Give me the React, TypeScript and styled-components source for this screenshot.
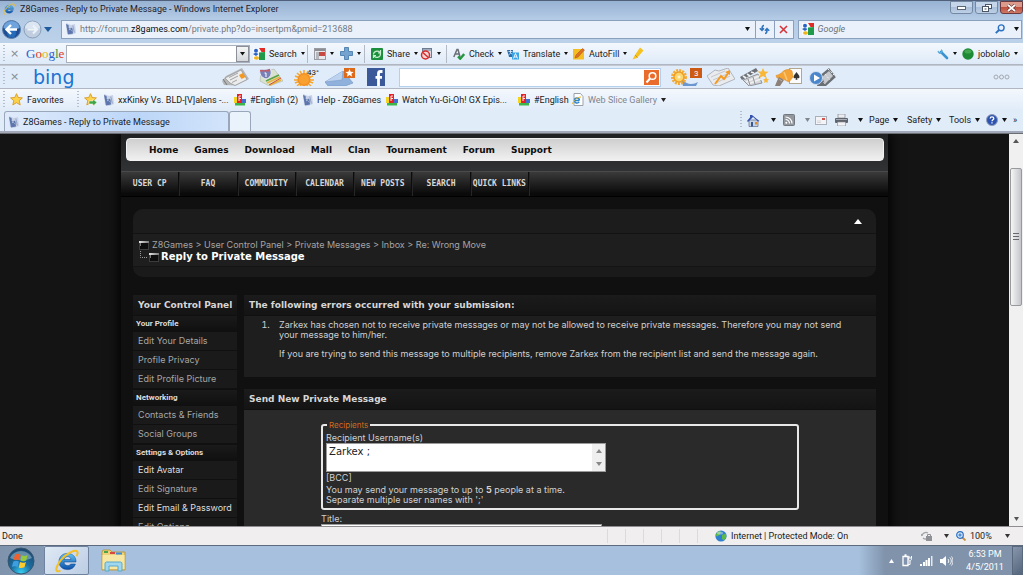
import React from "react";
import styled, { createGlobalStyle } from "styled-components";

const Global = createGlobalStyle`
  * { box-sizing: border-box; }
  html, body, #root { height: 100%; }
  body { margin: 0; overflow: hidden; background: #141414; }
  button, input, textarea { font: inherit; color: inherit; margin: 0; border-radius: 0; outline: none; }
  button { background: none; border: 0; padding: 0; cursor: pointer; }
  a { color: inherit; text-decoration: none; }
  svg { display: block; flex: none; }
`;

const ui = `Roboto, "Open Sans", sans-serif`;
const web = `Inter, "DejaVu Sans", sans-serif`;
const webBold = `"DejaVu Sans", sans-serif`;

/* ---------- window chrome ---------- */

const Window = styled.div`
  height: 100vh;
  display: flex;
  flex-direction: column;
  font: 9px/14px ${ui};
  color: #1b1b1b;
`;

const TitleBar = styled.header`
  display: flex;
  align-items: center;
  height: 19px;
  padding: 0 0 3px 3px;
  gap: 5px;
  border-top: 1px solid #50607a;
  background: linear-gradient(#98b2d3, #b4cbe6);
  white-space: nowrap;
`;

const WindowTitle = styled.h1`
  flex: 1;
  margin: 0;
  font: inherit;
  color: #1a222e;
`;

const WindowButtons = styled.div`
  display: flex;
  gap: 2px;
  align-self: flex-start;
`;

const WindowButton = styled.button<{ $close?: boolean }>`
  display: flex;
  align-items: center;
  justify-content: center;
  width: 23px;
  height: 13px;
  border: 1px solid ${(p) => (p.$close ? "#6b3b40" : "#7388a3")};
  border-radius: 0 0 3px 3px;
  background: ${(p) =>
    p.$close
      ? "linear-gradient(#dc9a8c 0 45%, #bf4f3f 50%, #cf7a66)"
      : "linear-gradient(#c5d6ea 0 45%, #a9bfda 50%, #bdd0e6)"};
`;

const NavBar = styled.div`
  display: flex;
  align-items: center;
  height: 24px;
  padding: 0 1px 4px 2px;
  background: linear-gradient(#b4cbe6, #bcd2ea);
`;

const NavButtons = styled.div`
  display: flex;
  align-items: center;
  gap: 2px;
  width: 59px;
`;

const AddressBox = styled.form`
  display: flex;
  align-items: center;
  flex: 1;
  height: 19px;
  padding-left: 3px;
  gap: 4px;
  border: 1px solid #8ba0bd;
  background: #eaf1fa;
`;

const Address = styled.a`
  flex: 1;
  white-space: nowrap;
  color: #747a83;
  b { font-weight: 400; color: #0c0f14; }
`;

const AddressButtons = styled.span`
  display: flex;
  align-self: stretch;
`;

const BoxButton = styled.button<{ $w?: number; $line?: boolean }>`
  display: flex;
  align-items: center;
  justify-content: center;
  align-self: stretch;
  width: ${(p) => p.$w ?? 19}px;
  border-left: ${(p) => (p.$line ? "1px solid #8ba0bd" : "0")};
`;

const SearchBox = styled(AddressBox)`
  flex: none;
  width: 22%;
  margin-left: 4px;
  input {
    flex: 1;
    min-width: 0;
    border: 0;
    padding: 0;
    background: none;
    font-style: italic;
    &::placeholder { color: #6a717b; opacity: 1; }
  }
`;

const Toolbar = styled.div<{ $h: number }>`
  display: flex;
  align-items: center;
  height: ${(p) => p.$h}px;
  padding-left: 3px;
  border-bottom: 1px solid #b0b6c2;
  background: linear-gradient(#f4f8fd, #deeaf8);
  white-space: nowrap;
`;

const BingBar = styled(Toolbar)`
  background: #e0ecf9;
  border-top: 1px solid #c3c8d1;
`;

const Grip = styled.span`
  width: 2px;
  height: 18px;
  margin-right: 5px;
  background: repeating-linear-gradient(#b5bfce 0 1px, transparent 1px 3px);
`;

const Closer = styled.button`
  width: 9px;
  color: #858a93;
  font: 11px/14px "DejaVu Sans", sans-serif;
`;

const Google = styled.span`
  width: 40px;
  margin-left: 7px;
  font: 13px/16px "Liberation Serif", serif;
  color: #2f5fd0;
  i { font-style: normal; color: #d93a2b; }
  b { font-weight: 400; color: #e8b414; }
  em { font-style: normal; color: #2a9a41; }
`;

const Combo = styled.div`
  display: flex;
  width: 184px;
  height: 18px;
  margin-right: 3px;
  border: 1px solid #a9b1be;
  background: #fff;
  input { flex: 1; min-width: 0; border: 0; padding: 0 3px; background: none; }
  button { width: 13px; border: 1px solid #8b9099; background: linear-gradient(#f5f5f5, #d5d7db); }
`;

const Tool = styled.button<{ $w?: number }>`
  display: flex;
  align-items: center;
  gap: 4px;
  width: ${(p) => (p.$w ? p.$w + "px" : "auto")};
  height: 18px;
  flex: none;
  white-space: nowrap;
`;

const Rule = styled.span`
  width: 1px;
  height: 18px;
  margin: 0 6px 0 4px;
  background: #b3bac5;
`;

const Push = styled.span`
  flex: 1;
`;

const BingLogo = styled.span`
  width: 185px;
  margin-left: 14px;
  font: 19px/20px "DejaVu Sans", sans-serif;
  color: #1c73d2;
`;

const BingCell = styled.button<{ $w: number }>`
  display: flex;
  justify-content: center;
  width: ${(p) => p.$w}px;
  flex: none;
`;

const BingSearch = styled.form`
  display: flex;
  align-items: center;
  width: 262px;
  height: 19px;
  margin: 0 9px 0 6px;
  padding-right: 1px;
  border: 1px solid #b5cfee;
  background: #fff;
  input { flex: 1; min-width: 0; border: 0; padding: 0 4px; background: none; }
`;

const FavBar = styled.nav`
  display: flex;
  align-items: center;
  height: 21px;
  padding-left: 3px;
  background: linear-gradient(#f4f8fd, #e1ecf9);
  white-space: nowrap;
`;

const FavLink = styled.a<{ $w: number; $dim?: boolean }>`
  display: flex;
  align-items: center;
  gap: 4px;
  width: ${(p) => p.$w}px;
  flex: none;
  color: ${(p) => (p.$dim ? "#7e858f" : "inherit")};
`;

const TabBar = styled.div`
  display: flex;
  align-items: flex-end;
  height: 23px;
  padding-left: 4px;
  border-bottom: 2px solid #a3a9b8;
  background: #e1ecf9;
  white-space: nowrap;
`;

const Tab = styled.button<{ $active?: boolean }>`
  display: flex;
  align-items: center;
  gap: 4px;
  width: ${(p) => (p.$active ? 225 : 22)}px;
  height: 20px;
  padding-left: 3px;
  border: 1px solid #9aa7bb;
  border-bottom: 0;
  border-radius: 3px 3px 0 0;
  background: ${(p) => (p.$active ? "linear-gradient(90deg, #dfebfb, #bcd6f8 60%, #d2e4fa)" : "#eaf2fc")};
`;

const Commands = styled.div`
  display: flex;
  align-items: center;
  height: 22px;
  margin-left: auto;
`;

/* ---------- web page ---------- */

const Viewport = styled.div`
  flex: 1;
  min-height: 0;
  display: flex;
  border-top: 1px solid #6b6e75;
`;

const Page = styled.div`
  flex: 1;
  min-width: 0;
  overflow: hidden;
  background: #141414;
  font: 9px/10px ${web};
  color: #d0d0d0;
`;

const Site = styled.div`
  width: 76%;
  margin: 0 auto;
  min-height: 100%;
  background: #101010;
  box-shadow: 0 0 12px 2px #000;
`;

const SiteHead = styled.div`
  padding: 4px 4px 10px 5px;
  background: linear-gradient(#202123, #303234);
`;

const SiteMenu = styled.nav`
  display: flex;
  align-items: center;
  gap: 16px;
  height: 23px;
  padding-left: 22px;
  border: 1px solid #f2f2f2;
  border-radius: 4px;
  background: linear-gradient(#cfcfcf, #f0f0f0);
  font: 700 9px/10px ${webBold};
  color: #0c0c0c;
`;

const ForumNav = styled.nav`
  display: flex;
  height: 26px;
  border-top: 1px solid #4a4a4a;
  background: linear-gradient(#3a3a3a, #0a0a0a 90%);
  border-bottom: 1px solid #000;
`;

const ForumLink = styled.a`
  display: flex;
  align-items: center;
  justify-content: center;
  flex: 0 0 7.6%;
  border-right: 1px solid #0c0c0c;
  box-shadow: 1px 0 #262626;
  font: 700 8px/10px "DejaVu Sans Mono", monospace;
  color: #d8d8d8;
  white-space: nowrap;
`;

const Body = styled.main`
  padding: 12px 12px 0;
`;

const Crumbs = styled.section`
  height: 68px;
  border-radius: 10px;
  background: linear-gradient(#1c1c1c 24px, #131313 24px 25px, #1e1e1e 25px 57px, #141414 57px 58px, #1a1a1a 58px);
`;

const CrumbTop = styled.div`
  display: flex;
  align-items: center;
  justify-content: flex-end;
  height: 25px;
  padding-right: 14px;
`;

const CrumbLine = styled.div`
  display: flex;
  align-items: center;
  gap: 3px;
  height: 12px;
  margin: 5px 0 0 6px;
  color: #a5a5a5;
  white-space: nowrap;
`;

const PageName = styled(CrumbLine)`
  gap: 2px;
  margin-top: 0;
  font: 700 10px/12px ${webBold};
  color: #fff;
`;

const Columns = styled.div`
  display: grid;
  grid-template-columns: 104px minmax(0, 1fr);
  gap: 7px;
  margin-top: 18px;
`;

const Heading = styled.h2`
  margin: 0 0 1px;
  height: 20px;
  padding: 0 5px;
  font: 700 9px/20px ${webBold};
  color: #d6d6d6;
  background: linear-gradient(#1b1b1b, #141414);
  white-space: nowrap;
`;

const SideGroup = styled.h3`
  margin: 0 0 1px;
  height: 15px;
  padding: 0 3px;
  font: 700 8px/15px ${ui};
  color: #dcdcdc;
  background: linear-gradient(#1a1a1a, #101010);
`;

const SideList = styled.ul`
  margin: 0 0 2px;
  padding: 0;
  list-style: none;
`;

const SideItem = styled.li<{ $lit?: boolean }>`
  height: 18px;
  margin-bottom: 1px;
  padding-left: 5px;
  line-height: 18px;
  background: #1a1a1a;
  color: ${(p) => (p.$lit ? "#dedede" : "#a6a6a6")};
  white-space: nowrap;
`;

const ErrorBox = styled.div`
  height: 61px;
  padding: 4px 16px 0 17px;
  background: #1e1e1e;
  margin-bottom: 12px;
  ol { margin: 0; padding-left: 11px; }
  li { padding-left: 7px; }
  p { margin: 0 0 9px; }
`;

const FormBox = styled.form`
  min-height: 200px;
  padding: 9px 77px 0;
  background: #2a2a2a;
`;

const Fieldset = styled.fieldset`
  margin: 0;
  padding: 2px 3px 3px;
  min-width: 0;
  border: 2px solid #e8e8e8;
  border-radius: 3px;
`;

const Legend = styled.legend`
  margin-left: 1px;
  padding: 0 2px;
  font-size: 8px;
  line-height: 12px;
  color: #d2691e;
`;

const Label = styled.label`
  display: block;
  height: 10px;
`;

const Recipients = styled.div`
  display: flex;
  width: 280px;
  height: 29px;
  margin-bottom: 1px;
  background: #fff;
  border: 1px solid #9a9a9a;
  textarea {
    flex: 1;
    min-width: 0;
    border: 0;
    padding: 2px;
    resize: none;
    overflow: hidden;
    background: none;
    font: 10px/12px ${webBold};
    color: #222;
  }
`;

const MiniScroll = styled.span`
  display: flex;
  flex-direction: column;
  align-items: center;
  justify-content: space-between;
  width: 13px;
  padding: 5px 0;
  background: #efefef;
`;

const Bcc = styled.a`
  display: block;
  margin-bottom: 2px;
`;

const Hint = styled.p`
  margin: 0;
`;

const TitleLabel = styled(Label)`
  margin-top: 4px;
`;

const TitleInput = styled.input`
  display: block;
  width: 281px;
  height: 18px;
  border: 1px solid #999;
  background: #fff;
`;

const Scrollbar = styled.div`
  display: flex;
  flex-direction: column;
  align-items: center;
  justify-content: space-between;
  width: 14px;
  padding: 5px 0;
  background: #f0f0f0;
`;

const Thumb = styled.div`
  display: flex;
  align-items: center;
  justify-content: center;
  width: 12px;
  flex: 0 0 36%;
  margin: 25px 0 auto;
  border: 1px solid #97999d;
  border-radius: 2px;
  background: linear-gradient(90deg, #f5f5f5, #d3d4d8 70%, #c3c5ca);
`;

/* ---------- status bar and taskbar ---------- */

const StatusBar = styled.footer`
  display: flex;
  align-items: center;
  height: 19px;
  padding: 0 4px 0 2px;
  border-top: 1px solid #8e8e90;
  background: #f0eeee;
  white-space: nowrap;
`;

const Cells = styled.div`
  display: flex;
  height: 14px;
  margin-left: auto;
  span { width: 18px; border-left: 1px solid #dcdada; }
`;

const Taskbar = styled.div`
  display: flex;
  align-items: stretch;
  height: 30px;
  border-top: 1px solid #5d6a7d;
  background: #a6c0dd;
`;

const StartCell = styled.button`
  display: flex;
  align-items: center;
  justify-content: center;
  width: 44px;
  padding-right: 3px;
  background: linear-gradient(90deg, #7f93ad, #8499b4);
`;

const TaskButton = styled.button<{ $on?: boolean }>`
  display: flex;
  align-items: center;
  justify-content: center;
  width: 45px;
  margin-right: 2px;
  border: ${(p) => (p.$on ? "1px solid #6f839f" : "0")};
  border-radius: 2px;
  background: ${(p) => (p.$on ? "linear-gradient(135deg, #dfe9f5, #bccde3)" : "none")};
`;

const Tray = styled.div`
  display: flex;
  align-items: center;
  margin-left: auto;
  background: linear-gradient(90deg, #a6c0dd, #8093ab 26px);
`;

const TrayIcons = styled.div`
  display: flex;
  align-items: center;
  gap: 7px;
  padding: 0 5px 0 30px;
`;

const Clock = styled.time`
  width: 54px;
  text-align: center;
  line-height: 13px;
  color: #fff;
`;

const ShowDesktop = styled.button`
  align-self: stretch;
  width: 11px;
  border: 1px solid #59687d;
  background: linear-gradient(135deg, #8796ac, #55657c);
`;

/* ---------- icons ---------- */

const Down = ({ s = 5, c = "#111" }: { s?: number; c?: string }) => (
  <svg width={s} height={s === 4 ? 3 : 4} viewBox="0 0 6 4" preserveAspectRatio="none"><path d="M0 0h6L3 4z" fill={c} /></svg>
);
const Up = ({ c = "#555", w = 6 }: { c?: string; w?: number }) => (
  <svg width={w} height={w > 6 ? 5 : 4} viewBox="0 0 6 4" preserveAspectRatio="none"><path d="M0 4h6L3 0z" fill={c} /></svg>
);
const IE = ({ s }: { s: number }) => (
  <svg width={s} height={s} viewBox="0 0 24 24">
    <defs>
      <linearGradient id="ieg" x1="0" y1="0" x2="0" y2="1"><stop offset="0" stopColor="#5fc3f5" /><stop offset="1" stopColor="#0b4fa8" /></linearGradient>
    </defs>
    <path d="M21 13H9c.2 2.300 1.500 3.600 3.600 3.600 1.500 0 2.500-.6 3-1.600h4.800c-1 3.600-4 5.600-8 5.600C7.300 20.600 4 17.300 4 12.600 4 7.800 7.400 4.400 12.400 4.400c5.400 0 8.800 3.600 8.600 8.600zM9.100 10.500h6.800c-.2-1.800-1.400-2.900-3.300-2.900-1.900 0-3.100 1.100-3.500 2.900z" fill="url(#ieg)" stroke="#0a3f86" strokeWidth=".5" />
    <path d="M5.500 21.500C2 23.500.3 21.500 2 17.500 4 12.500 9 7 14.500 3.800 19 1.200 23 .8 22.600 4.200c-.1 1-.5 2-1 3" fill="none" stroke="#f3c02a" strokeWidth="2" />
  </svg>
);
const Back = () => (
  <svg width="19" height="19" viewBox="0 0 19 19">
    <circle cx="9.500" cy="9.500" r="9" fill="#1e4f96" stroke="#5b7ca8" />
    <path d="M1.500 8a8 7 0 0 1 16 0c-4 2-12 2-16 0z" fill="#6ea3dc" />
    <circle cx="9.500" cy="13" r="4.500" fill="#2a7fd0" opacity=".6" />
    <path d="M15 9.500H5M9 5L4.500 9.500 9 14" fill="none" stroke="#fff" strokeWidth="2.400" />
  </svg>
);
const Forward = () => (
  <svg width="19" height="19" viewBox="0 0 19 19">
    <circle cx="9.500" cy="9.500" r="8.500" fill="#c0cedf" stroke="#8a9db8" />
    <path d="M2 8.500a7.500 7 0 0 1 15 0z" fill="#dce6f2" />
    <path d="M4.500 9.500h9M10 5.500l4 4-4 4" fill="none" stroke="#edf3fa" strokeWidth="2" />
  </svg>
);
const Z8 = () => (
  <svg width="11" height="12" viewBox="0 0 11 12">
    <path d="M1 0l5 2 4-1 1 9-5 2-4-1z" fill="#c9d3e8" />
    <path d="M1 1l2.500 1 .8 5.500L6 4.500l1.500 1 .5 5-5 1z" fill="#5d76ad" />
    <path d="M3.500 4.500l4 4M7.800 2.500l1.500 7" fill="none" stroke="#93a4ca" />
  </svg>
);
const GoogleG = () => (
  <svg width="12" height="12" viewBox="0 0 12 12">
    <rect width="12" height="12" fill="#f8fafc" />
    <path d="M6 0h6v4H8.500z" fill="#e02a24" /><path d="M6 4.500l6-.5v8H6z" fill="#209a48" />
    <circle cx="3" cy="2.800" r="2" fill="#2b62c8" /><path d="M0 6c2-1.500 4-1 5.500 0L3 8z" fill="#2b62c8" />
    <ellipse cx="3.500" cy="10" rx="2.500" ry="1.800" fill="#efb31b" />
  </svg>
);
const Refresh = () => (
  <svg width="11" height="11" viewBox="0 0 11 11" fill="none" stroke="#2f74bd" strokeWidth="1.500">
    <path d="M5 1.500C3 1.500 3 3 3 6M.8 4.200L3 6.500l2-2.300M6 9.500c2 0 2-1.500 2-4.500M6 6.800l2-2.300 2.200 2.300" />
  </svg>
);
const Stop = () => (
  <svg width="9" height="9" viewBox="0 0 9 9"><path d="M1 1l7 7M8 1L1 8" stroke="#d2353a" strokeWidth="1.600" /></svg>
);
const Lens = ({ s = 10, c = "#2b6fc0" }: { s?: number; c?: string }) => (
  <svg width={s} height={s} viewBox="0 0 10 10" fill="none" stroke={c}>
    <circle cx="6.200" cy="3.800" r="2.900" strokeWidth="1.400" /><path d="M4 6L.8 9.200" strokeWidth="1.800" />
  </svg>
);
const PanelIcon = () => (
  <svg width="12" height="12" viewBox="0 0 12 12">
    <rect x=".5" y=".5" width="11" height="11" fill="#e8e8ea" stroke="#9a9ca2" /><path d="M1 1h10v2H1z" fill="#8a8d94" />
    <path d="M2 4h3v7H2z" fill="#b4b7be" /><path d="M5 4h6v4H5z" fill="#c64a42" />
  </svg>
);
const Plus = () => (
  <svg width="13" height="13" viewBox="0 0 13 13"><path d="M4.500.5h4v4h4v4h-4v4h-4v-4h-4v-4h4z" fill="#74a3cf" stroke="#5585b3" /></svg>
);
const ShareIcon = () => (
  <svg width="12" height="12" viewBox="0 0 12 12"><rect width="12" height="12" rx="1" fill="#1d8e3c" />
    <path d="M2.500 6.500c0-3 4-4.500 6.500-2M9.500 2v3H7M9.500 5.500c0 4-4 5-6.500 2.500M2.500 10V7.500H5" fill="none" stroke="#c8edcf" strokeWidth="1.200" /></svg>
);
const Blocked = () => (
  <svg width="13" height="12" viewBox="0 0 13 12"><rect x="2.500" y=".5" width="9" height="9" fill="#d7dde6" stroke="#6d7c91" />
    <path d="M3 2h8" stroke="#6d7c91" /><circle cx="5.500" cy="7" r="4" fill="#f3d5d5" stroke="#d82b2b" strokeWidth="1.500" /><path d="M2.800 4.500L8.300 9.500" stroke="#d82b2b" strokeWidth="1.400" /></svg>
);
const CheckIcon = () => (
  <svg width="12" height="12" viewBox="0 0 12 12" fill="none"><path d="M.8 9L4 1.500h1L7 9M2 6h4" stroke="#6b6f76" strokeWidth="1.500" />
    <path d="M5 8.500l2.200 2.200 4-4.700" stroke="#23963e" strokeWidth="2.400" /></svg>
);
const TranslateIcon = () => (
  <svg width="12" height="12" viewBox="0 0 12 12"><path d="M0 2h6v7H2z" fill="#2d6ca8" /><path d="M1.500 3.500h4M3.500 2v2c0 1.500-1 2.500-2 3M3 4.500l2.500 2" stroke="#e1edf8" fill="none" strokeWidth=".8" />
    <rect x="5" y="4.500" width="7" height="7" fill="#3aa5e6" /><path d="M6.500 10.500l2-5 2 5M7.300 9h2.500" stroke="#fff" fill="none" strokeWidth=".9" /></svg>
);
const AutoIcon = () => (
  <svg width="12" height="12" viewBox="0 0 12 12"><path d="M0 1h11v10.500H0z" fill="#f6bd22" /><path d="M2 10l1-3L9.500.5l2 1.500L5 9z" fill="#e56e1f" stroke="#8d5b2e" strokeWidth=".5" /></svg>
);
const Marker = () => (
  <svg width="12" height="13" viewBox="0 0 12 13"><path d="M8 .5l3.500 3L5 11 .5 12.500 3 8z" fill="#f6c21f" /><path d="M3 8l2.500 2.500" stroke="#cf9814" /></svg>
);
const Wrench = () => (
  <svg width="12" height="12" viewBox="0 0 12 12"><path d="M4 4l6 6" stroke="#3a92cf" strokeWidth="2.600" strokeLinecap="round" /><path d="M1 2.500L2.500 4 4 3.500 4.200 1 6 3 4.500 5.500 2.500 6 .5 4z" fill="#56a8dd" /></svg>
);
const Orb = () => (
  <svg width="12" height="12" viewBox="0 0 12 12"><circle cx="6" cy="6" r="5.700" fill="#1d8a36" /><ellipse cx="6" cy="3.500" rx="3.500" ry="2" fill="#5dba62" opacity=".6" /></svg>
);
const News = () => (
  <svg width="28" height="18" viewBox="0 0 28 18"><path d="M4 8L20 0l7 11-13 6.500L2 17l-2-4z" fill="#b5b6b8" /><path d="M3 10L19 2l6 9.500-12 6L8 15z" fill="#ececec" stroke="#8f9194" strokeWidth=".7" />
    <path d="M7 9.500l9-4.500M8 12l8-4M10 14.500l5-2.500" stroke="#a0a2a6" /><path d="M17 7l4-2 2.500 4-4 2z" fill="#f3991f" /><path d="M1 11l4 6" stroke="#777" /></svg>
);
const MapIcon = () => (
  <svg width="24" height="18" viewBox="0 0 24 18"><path d="M2 5l13-4 9 12-14 5L1 13z" fill="#d9e2cf" stroke="#a9ab9f" strokeWidth=".5" /><path d="M8 15l13-6M11 17l11-5" stroke="#e8b43a" strokeWidth="1.500" /><path d="M7 13l13-6" stroke="#5aa24c" strokeWidth="1.600" /><path d="M10 17l12-7" stroke="#d4473a" />
    <path d="M1 1c3 .5 8 .5 10-1 3 6 0 10-4 11C2 9.500 0 6 1 1z" fill="#7880b8" stroke="#ececf4" /><path d="M1 2c3 .5 8 .5 10-1v2.500H1z" fill="#c65a63" /><path d="M5.500 5H7v4" fill="none" stroke="#fff" /></svg>
);
const Sun = () => (
  <svg width="28" height="18" viewBox="0 0 28 18"><g stroke="#f6a42a" strokeWidth="1.500"><path d="M12 2v16M2 12h20M5 5l14 13M19 5L5 18M8 3l8 16M16 3L8 18M3 8l18 7M21 8L3 15" /></g>
    <circle cx="12" cy="11.500" r="6.500" fill="#f58f1f" /><circle cx="12" cy="11.500" r="5" fill="#f9a130" />
    <text x="15" y="7" fontSize="8" fontFamily="Roboto, sans-serif" fill="#222">43°</text></svg>
);
const Mail = () => (
  <svg width="32" height="18" viewBox="0 0 32 18"><path d="M0 14L18 3l10 12-8 3H3z" fill="#8fb1dc" stroke="#6e93c6" strokeWidth=".6" /><path d="M0 14l17-2L18 3" fill="#bcd2ee" stroke="#7c9dcb" strokeWidth=".6" />
    <rect x="19" width="11" height="10" fill="#dd6a1b" /><path d="M24.500 1l1.200 2.700 3 .2-2.300 1.900.8 2.900-2.700-1.600-2.600 1.600.8-2.900-2.300-1.900 3-.2z" fill="#fff" /></svg>
);
const Facebook = () => (
  <svg width="18" height="18" viewBox="0 0 18 18"><rect width="18" height="18" fill="#3b5998" /><path d="M15.500 3.500h-2c-1.300 0-2 .7-2 2V18M8.500 9.300h6.500" stroke="#fff" strokeWidth="2.800" fill="none" /></svg>
);
const Ribbon = () => (
  <svg width="32" height="18" viewBox="0 0 32 18"><path d="M10 11c6 6 12 6 17 3l-2 4H12z" fill="#6c96cf" /><circle cx="8" cy="9" r="6.500" fill="none" stroke="#f4ab33" strokeWidth="3" strokeDasharray="2 1" /><circle cx="8" cy="9" r="5" fill="#fbd66d" stroke="#f09d25" strokeWidth="1.500" /><circle cx="8" cy="9" r="1.500" fill="#fff3cf" />
    <rect x="19" width="12" height="10" fill="#cc5a14" /><text x="23" y="8" fontSize="8" fontFamily="Roboto, sans-serif" fill="#fff">3</text></svg>
);
const ChartIcon = () => (
  <svg width="28" height="18" viewBox="0 0 28 18"><path d="M0 8L8 2l4 1 9-3 7 11-16 7L6 17z" fill="#e9ebee" stroke="#a4a7ad" strokeWidth=".8" /><path d="M4 9l14-6M6 12l14-6M9 15l14-7" stroke="#c4c8ce" /><path d="M8 16l6-8 3 3 5-7" fill="none" stroke="#f49a22" strokeWidth="2" /><path d="M18 4l5-2v5z" fill="#f49a22" /></svg>
);
const Clapper = () => (
  <svg width="30" height="18" viewBox="0 0 30 18"><path d="M0 9L16 0l2 3L2 12z" fill="#6d7077" /><path d="M3 12l15-6 4 9-13 3z" fill="#d4d6da" stroke="#8f9299" /><path d="M3 8l3 2M7 6l3 2M11 4l3 1M6 14l13-6M8 16l13-5" stroke="#f0f0f0" strokeWidth="1.600" /><path d="M8 11l2 6M13 9l2 7" stroke="#8f9299" />
    <path d="M23 0l1.500 3.500 4 .3-3 2.500 1 4-3.500-2.200L19.500 10l1-4-3-2.400 4-.2z" fill="#f8b737" /><path d="M26 9l1 2 2 .3-1.500 1.500.3 2.200-1.800-1-2 1 .5-2.200-1.500-1.500 2-.3z" fill="#f8b737" /></svg>
);
const Games = () => (
  <svg width="28" height="18" viewBox="0 0 28 18"><rect x="14.500" y=".5" width="12" height="15" fill="#fbfbfb" stroke="#b3a78f" /><path d="M21.500 4c1 2 3 3 3 5 0 1.500-2 1.500-2.500.7l.5 2h-2l.5-2c-.5.8-2.500.8-2.500-.7 0-2 2-3 3-5z" fill="#333" />
    <path d="M1 7.500C4 7 6 5.500 8 3.500 11 1 15 1 17 3l1 6-4 5-6-3-6-1z" fill="#f4a436" stroke="#dd8a22" strokeWidth=".6" /><path d="M9 4l3 8" stroke="#f9c776" strokeWidth="1.500" /><path d="M4 9l5 3-4 6H0l2-5z" fill="#8d8078" /><path d="M4 11l3 2" stroke="#bdb3ac" /></svg>
);
const Film = () => (
  <svg width="28" height="18" viewBox="0 0 28 18"><path d="M9 9L20 0l7 9-10 9H8z" fill="#6a6e75" /><path d="M13 9l7-6 4 5-8 8z" fill="#c6cace" /><path d="M16 6l5 6M10 9l7 8M19 1l8 8" stroke="#eee" strokeDasharray="2 1.500" /><circle cx="7" cy="10" r="6.500" fill="#4a86cb" stroke="#d3e0f0" /><path d="M5 6.500v7l6-3.500z" fill="#fff" /></svg>
);
const Star = ({ arrow }: { arrow?: boolean }) => (
  <svg width="13" height="13" viewBox="0 0 13 13"><path d="M6.500.7l1.700 3.800 4.200.4-3.200 2.800 1 4.200-3.700-2.200-3.700 2.200 1-4.200L.6 4.900l4.200-.4z" fill="#fbd24a" stroke="#d99a23" strokeWidth=".9" />
    {arrow && <path d="M5 8h4V6l4 3.500L9 13v-2H5z" fill="#3ea646" stroke="#fff" strokeWidth=".5" />}</svg>
);
const Blocks = () => (
  <svg width="12" height="12" viewBox="0 0 12 12"><rect y="3" width="4" height="6" fill="#f2d322" /><rect x="3" width="5" height="9" fill="#e32227" /><path d="M5 2v5M5 2h2M5 4.500h2" stroke="#fff" strokeWidth=".9" /><rect x="8" y="5" width="4" height="4" fill="#3f6fd0" /><rect x="1" y="9" width="10" height="2.500" fill="#3cb54a" /></svg>
);
const Slice = () => (
  <svg width="12" height="13" viewBox="0 0 12 13"><path d="M2 .5h6.500l2.500 3v9H2z" fill="#fff" stroke="#9aa1ab" /><path d="M7.500 7.500h-5c0 3 3.500 3.200 4.700 1.400M2.500 7.300c.3-3 4.700-3 5 0" fill="none" stroke="#2b84c9" strokeWidth="1.400" /><path d="M.5 11C1 8 5 4 9 4" stroke="#e7b52c" fill="none" /></svg>
);
const Home = () => (
  <svg width="13" height="13" viewBox="0 0 13 13"><path d="M2 6h9v6.500H2z" fill="#c7d2e2" stroke="#5b6d8d" strokeWidth=".7" /><path d="M0 7l5-6 6 5 1.500 1L11 7.500 6 3 1 8z" fill="#3552ae" /><path d="M3 1h2v3H3z" fill="#3552ae" /><path d="M4 8h2v4.500H4z" fill="#39588f" /><path d="M8 8h2v2.500H8z" fill="#d98e32" /></svg>
);
const Rss = () => (
  <svg width="12" height="12" viewBox="0 0 12 12"><rect x=".5" y=".5" width="11" height="11" rx="1" fill="#93979e" stroke="#73777e" /><g fill="none" stroke="#fff" strokeWidth="1.200"><path d="M2.500 5.500a4 4 0 0 1 4 4M2.500 3a6.500 6.500 0 0 1 6.500 6.500" /></g><circle cx="3.300" cy="8.700" r="1" fill="#fff" /></svg>
);
const Letter = () => (
  <svg width="12" height="9" viewBox="0 0 12 9"><rect x=".5" y=".5" width="11" height="8" fill="#f4f4f6" stroke="#aab0ba" /><path d="M7 2h3v2H7z" fill="#d2544d" /><path d="M2 5h4M2 6.500h4" stroke="#c6cad1" strokeWidth=".7" /></svg>
);
const Printer = () => (
  <svg width="13" height="12" viewBox="0 0 13 12"><path d="M3 0h7v4H3z" fill="#e9edf2" stroke="#777" strokeWidth=".6" /><rect y="4" width="13" height="5" rx="1" fill="#5f656e" /><path d="M1 5.500h11" stroke="#a8adb5" /><path d="M2.500 8h8v4h-8z" fill="#f1f3f6" stroke="#888" strokeWidth=".6" /></svg>
);
const Help = () => (
  <svg width="12" height="12" viewBox="0 0 12 12"><circle cx="6" cy="6" r="5.500" fill="#2c53b0" stroke="#8f9cb8" /><path d="M4.200 4.500c0-2.300 3.600-2.300 3.600 0 0 1.300-1.800 1.300-1.800 2.700M6 8.200v1.400" stroke="#fff" strokeWidth="1.300" fill="none" /></svg>
);
const Folder = () => (
  <svg width="10" height="9" viewBox="0 0 10 9">
    <defs><linearGradient id="fold"><stop offset="0" stopColor="#e8e8e8" /><stop offset="1" stopColor="#777" /></linearGradient></defs>
    <rect x=".5" y=".5" width="9" height="8" fill="#0d0d0d" stroke="#3c3c3c" /><path d="M0 0h10v2H0z" fill="url(#fold)" /><path d="M1.500 2v3" stroke="#777" /></svg>
);
const Branch = () => (
  <svg width="8" height="12" viewBox="0 0 8 12"><path d="M1.500 0v6.500H8" fill="none" stroke="#9a9a9a" strokeDasharray="1 1" /></svg>
);
const Globe = () => (
  <svg width="12" height="12" viewBox="0 0 12 12"><circle cx="6" cy="6" r="5.600" fill="#2f7fd0" /><path d="M2 2.500C4 1 5 1 6 2L4.500 5 2 6.500.5 5zM7 5l3.500-1.500 1 3L9 10.500 7 9z" fill="#5cba4a" /><ellipse cx="5" cy="3" rx="3" ry="1.500" fill="#fff" opacity=".4" /></svg>
);
const Shield = () => (
  <svg width="12" height="12" viewBox="0 0 12 12"><path d="M1 6a4 4 0 0 1 6-3M1 6l-1-2M5 9a4 4 0 0 1-3-1" stroke="#a2a4a8" fill="none" strokeWidth="1.300" /><rect x="5" y="6" width="6" height="5" fill="#8f9196" /><path d="M6.500 6V4.500h3V6" fill="none" stroke="#8f9196" /></svg>
);
const Zoom = () => (
  <svg width="10" height="10" viewBox="0 0 10 10"><path d="M6 6l3.500 3.500" stroke="#c58d3c" strokeWidth="1.800" /><circle cx="4" cy="4" r="3.300" fill="#d7ebfd" stroke="#2b6fc0" strokeWidth="1.200" /><path d="M2.300 4h3.400M4 2.300v3.400" stroke="#2b6fc0" /></svg>
);
const Start = () => (
  <svg width="28" height="28" viewBox="0 0 28 28">
    <defs><radialGradient id="orb" cx=".5" cy=".95" r=".9"><stop offset="0" stopColor="#36d0f5" /><stop offset=".45" stopColor="#1b6d9f" /><stop offset="1" stopColor="#1d4a70" /></radialGradient></defs>
    <circle cx="14" cy="14" r="13" fill="url(#orb)" stroke="#38566f" /><path d="M3 11a11.500 10 0 0 1 22 0c-6 3-16 3-22 0z" fill="#d3e3ee" opacity=".4" />
    <path d="M8 7.500c2.300-1 3.700-.8 5.600.3l-1.300 5.500c-2-1-3.500-1.100-5.700-.2z" fill="#f0602a" /><path d="M14.700 8.300c2 .9 3.500.9 5.900-.2l-1.400 5.500c-2.200 1-3.900.9-5.800 0z" fill="#94c83d" />
    <path d="M6.300 14.400c2.200-.9 3.700-.8 5.600.2l-1.300 5.300c-1.900-1-3.400-1-5.700-.1z" fill="#3e9fe0" /><path d="M13 15.100c2 .9 3.600.9 5.900-.2l-1.400 5.400c-2.200 1-3.900 1-5.800.1z" fill="#fbca2e" />
  </svg>
);
const Explorer = () => (
  <svg width="25" height="23" viewBox="0 0 25 23"><path d="M1 3l1-2h7l2 2h13v18H1z" fill="#ecd27b" stroke="#b99a45" /><path d="M3 2h4v2H3z" fill="#4aa54a" /><path d="M9 3h5v2H9z" fill="#d8493e" /><path d="M15 3.500h6v2h-6z" fill="#3a8ee0" /><path d="M1.500 6h22v14h-22z" fill="#f7e7a4" />
    <path d="M4 22v-7c0-2 1-2 2-2h13c1 0 2 0 2 2v7h-4v-5H8v5z" fill="#9fd7ef" stroke="#5aa8cc" /></svg>
);
const Plug = () => (
  <svg width="12" height="13" viewBox="0 0 12 13" fill="none" stroke="#fff"><path d="M2 2.500h5v9H2zM3.500 1h2" strokeWidth="1.300" /><path d="M7 4h4M8 2v2M10.500 2v2M7.500 4.500c0 3 3 3 3 0M9 7v3.500H7" /></svg>
);
const Signal = () => (
  <svg width="13" height="11" viewBox="0 0 13 11" fill="#fff"><path d="M0 9h2v2H0zM3 7h2v4H3zM5.500 5h2v6h-2zM8 3h2v8H8z" /><path d="M11 1h1.500v10H11z" opacity=".8" /></svg>
);
const Speaker = () => (
  <svg width="13" height="12" viewBox="0 0 13 12"><path d="M0 4h2.500L6 1v10L2.500 8H0z" fill="#fff" /><path d="M8 4c1 1 1 3 0 4M9.800 2.500c2 2 2 5 0 7M11.500 1.500c2 2.500 2 6.500 0 9" fill="none" stroke="#fff" strokeWidth=".9" /></svg>
);

/* ---------- data ---------- */

const siteMenu = ["Home", "Games", "Download", "Mall", "Clan", "Tournament", "Forum", "Support"];
const forumMenu = ["USER CP", "FAQ", "COMMUNITY", "CALENDAR", "NEW POSTS", "SEARCH", "QUICK LINKS"];
const sideMenu: { title: string; items: { t: string; lit?: boolean }[] }[] = [
  { title: "Your Profile", items: [{ t: "Edit Your Details" }, { t: "Profile Privacy" }, { t: "Edit Profile Picture" }] },
  { title: "Networking", items: [{ t: "Contacts & Friends" }, { t: "Social Groups" }] },
  { title: "Settings & Options", items: [{ t: "Edit Avatar", lit: true }, { t: "Edit Signature" }, { t: "Edit Email & Password", lit: true }, { t: "Edit Options" }] },
];

export default function App() {
  return (
    <Window>
      <Global />
      <TitleBar>
        <IE s={12} />
        <WindowTitle>Z8Games - Reply to Private Message - Windows Internet Explorer</WindowTitle>
        <WindowButtons>
          <WindowButton aria-label="Minimize"><svg width="9" height="4"><rect x=".5" y=".5" width="8" height="3" fill="#fff" stroke="#5b6675" /></svg></WindowButton>
          <WindowButton aria-label="Restore"><svg width="10" height="8" viewBox="0 0 10 8" fill="#fff" stroke="#4a5565"><rect x="3.500" y=".5" width="6" height="4" /><rect x=".5" y="2.500" width="6" height="5" /><path d="M2.500 5h2" /></svg></WindowButton>
          <WindowButton $close aria-label="Close"><svg width="9" height="8" viewBox="0 0 9 8"><path d="M1 1l7 6M8 1L1 7" stroke="#5a2a2a" strokeWidth="3" /><path d="M1 1l7 6M8 1L1 7" stroke="#fff" strokeWidth="1.800" /></svg></WindowButton>
        </WindowButtons>
      </TitleBar>

      <NavBar>
        <NavButtons>
          <button aria-label="Back"><Back /></button>
          <button aria-label="Forward"><Forward /></button>
          <button aria-label="Recent pages"><svg width="8" height="5" viewBox="0 0 8 5"><path d="M0 0h8L4 5z" fill="#1f5b9c" /></svg></button>
        </NavButtons>
        <AddressBox>
          <Z8 />
          <Address href="#">http://forum.<b>z8games.com</b>/private.php?do=insertpm&amp;pmid=213688</Address>
          <AddressButtons>
            <BoxButton type="button" $w={14} aria-label="Show addresses"><Down /></BoxButton>
            <BoxButton type="button" $line aria-label="Refresh"><Refresh /></BoxButton>
            <BoxButton type="button" $line aria-label="Stop"><Stop /></BoxButton>
          </AddressButtons>
        </AddressBox>
        <SearchBox>
          <GoogleG />
          <input placeholder="Google" aria-label="Search the web" />
          <BoxButton type="button" $w={14} aria-label="Search"><Lens /></BoxButton>
          <BoxButton type="button" $w={10} aria-label="Search options"><Down /></BoxButton>
        </SearchBox>
      </NavBar>

      <Toolbar $h={22}>
        <Grip />
        <Closer aria-label="Close toolbar">×</Closer>
        <Google>G<i>o</i><b>o</b>g<em>l</em><i>e</i></Google>
        <Combo>
          <input aria-label="Google search" />
          <button aria-label="Search history"><svg width="11" height="4" viewBox="0 0 11 4"><path d="M3 0h5L5.500 3.500z" fill="#111" /></svg></button>
        </Combo>
        <Tool $w={50}><GoogleG />Search<Down s={4} /></Tool>
        <Rule />
        <Tool $w={26} aria-label="Panels"><PanelIcon /><Down s={4} /></Tool>
        <Tool $w={20} aria-label="Add"><Plus /><Down s={4} /></Tool>
        <Rule />
        <Tool $w={49}><ShareIcon />Share<Down s={4} /></Tool>
        <Tool $w={22} aria-label="Pop-up blocker"><Blocked /><Down s={4} /></Tool>
        <Rule />
        <Tool $w={54}><CheckIcon />Check<Down s={4} /></Tool>
        <Tool $w={66}><TranslateIcon />Translate<Down s={4} /></Tool>
        <Tool $w={59}><AutoIcon />AutoFill<Down s={4} /></Tool>
        <Tool $w={20} aria-label="Highlighter"><Marker /></Tool>
        <Push />
        <Tool $w={25} aria-label="Settings"><Wrench /><Down s={4} /></Tool>
        <Tool $w={61}><Orb />jobolalo<Down s={4} /></Tool>
      </Toolbar>

      <BingBar $h={24}>
        <Grip />
        <Closer aria-label="Close Bing bar">×</Closer>
        <BingLogo>bing</BingLogo>
        <BingCell $w={35} aria-label="News"><News /></BingCell>
        <BingCell $w={35} aria-label="Maps"><MapIcon /></BingCell>
        <BingCell $w={35} aria-label="Weather"><Sun /></BingCell>
        <BingCell $w={35} aria-label="Mail"><Mail /></BingCell>
        <BingCell $w={35} aria-label="Facebook"><Facebook /></BingCell>
        <BingSearch>
          <input aria-label="Bing search" />
          <button type="button" aria-label="Search Bing"><svg width="15" height="15" viewBox="0 0 15 15"><rect width="15" height="15" fill="#e96c2c" /><circle cx="8.500" cy="6" r="3.300" fill="none" stroke="#fff" strokeWidth="1.500" /><path d="M6 8.500L2.500 12.500" stroke="#fff" strokeWidth="2" /></svg></button>
        </BingSearch>
        <BingCell $w={34} aria-label="Rewards"><Ribbon /></BingCell>
        <BingCell $w={34} aria-label="Finance"><ChartIcon /></BingCell>
        <BingCell $w={34} aria-label="Movies"><Clapper /></BingCell>
        <BingCell $w={34} aria-label="Games"><Games /></BingCell>
        <BingCell $w={34} aria-label="Video"><Film /></BingCell>
        <Push />
        <Tool $w={30} aria-label="More"><svg width="17" height="6" viewBox="0 0 17 6" fill="none" stroke="#a4a9b1"><circle cx="3" cy="3" r="2" /><circle cx="8.500" cy="3" r="2" /><circle cx="14" cy="3" r="2" /></svg></Tool>
      </BingBar>

      <FavBar>
        <Grip />
        <Tool $w={67}><Star />Favorites</Tool>
        <Grip />
        <FavLink href="#" $w={19} aria-label="Add to Favorites Bar"><Star arrow /></FavLink>
        <FavLink href="#" $w={131}><Z8 />xxKinky Vs. BLD-[V]alens -...</FavLink>
        <FavLink href="#" $w={68}><Blocks />#English (2)</FavLink>
        <FavLink href="#" $w={84}><Z8 />Help - Z8Games</FavLink>
        <FavLink href="#" $w={132}><Blocks />Watch Yu-Gi-Oh! GX Epis...</FavLink>
        <FavLink href="#" $w={54}><Blocks />#English</FavLink>
        <FavLink href="#" $w={110} $dim><Slice />Web Slice Gallery <Down c="#222" /></FavLink>
      </FavBar>

      <TabBar>
        <Tab $active><Z8 />Z8Games - Reply to Private Message</Tab>
        <Tab aria-label="New tab" />
        <Commands>
          <Grip />
          <Tool $w={36} aria-label="Home"><Home /><Push /><Down /><Push /></Tool>
          <Tool $w={32} aria-label="Feeds"><Rss /><Push /><Down c="#80858e" /><Push /></Tool>
          <Tool $w={20} aria-label="Read mail"><Letter /></Tool>
          <Tool $w={34} aria-label="Print"><Printer /><Push /><Down /><Push /></Tool>
          <Tool $w={38}>Page<Down /></Tool>
          <Tool $w={42}>Safety<Down /></Tool>
          <Tool $w={37}>Tools<Down /></Tool>
          <Tool $w={27} aria-label="Help"><Help /><Down /></Tool>
          <Tool $w={10} aria-label="More commands">»</Tool>
        </Commands>
      </TabBar>

      <Viewport>
        <Page>
          <Site>
            <SiteHead>
              <SiteMenu>{siteMenu.map((t) => <a href="#" key={t}>{t}</a>)}</SiteMenu>
            </SiteHead>
            <ForumNav>{forumMenu.map((t) => <ForumLink href="#" key={t}>{t}</ForumLink>)}</ForumNav>
            <Body>
              <Crumbs>
                <CrumbTop><button aria-label="Collapse"><Up c="#fff" w={8} /></button></CrumbTop>
                <CrumbLine>
                  <Folder />
                  <span><a href="#">Z8Games</a> &gt; <a href="#">User Control Panel</a> &gt; <a href="#">Private Messages</a> &gt; <a href="#">Inbox</a> &gt; <a href="#">Re: Wrong Move</a></span>
                </CrumbLine>
                <PageName><Branch /><Folder />Reply to Private Message</PageName>
              </Crumbs>
              <Columns>
                <aside>
                  <Heading>Your Control Panel</Heading>
                  {sideMenu.map((g) => (
                    <React.Fragment key={g.title}>
                      <SideGroup>{g.title}</SideGroup>
                      <SideList>{g.items.map((i) => <SideItem key={i.t} $lit={i.lit}><a href="#">{i.t}</a></SideItem>)}</SideList>
                    </React.Fragment>
                  ))}
                </aside>
                <section>
                  <Heading>The following errors occurred with your submission:</Heading>
                  <ErrorBox>
                    <ol>
                      <li>
                        <p>Zarkex has chosen not to receive private messages or may not be allowed to receive private messages. Therefore you may not send your message to him/her.</p>
                        <p>If you are trying to send this message to multiple recipients, remove Zarkex from the recipient list and send the message again.</p>
                      </li>
                    </ol>
                  </ErrorBox>
                  <Heading>Send New Private Message</Heading>
                  <FormBox>
                    <Fieldset>
                      <Legend>Recipients</Legend>
                      <Label htmlFor="recipients">Recipient Username(s)</Label>
                      <Recipients>
                        <textarea id="recipients" defaultValue="Zarkex ;" />
                        <MiniScroll><Up c="#888" /><Down c="#888" s={6} /></MiniScroll>
                      </Recipients>
                      <Bcc href="#">[BCC]</Bcc>
                      <Hint>You may send your message to up to <b>5</b> people at a time.</Hint>
                      <Hint>Separate multiple user names with ';'</Hint>
                    </Fieldset>
                    <TitleLabel htmlFor="title">Title:</TitleLabel>
                    <TitleInput id="title" />
                  </FormBox>
                </section>
              </Columns>
            </Body>
          </Site>
        </Page>
        <Scrollbar>
          <Up />
          <Thumb><svg width="6" height="7" viewBox="0 0 6 7"><path d="M0 .5h6M0 3.500h6M0 6.500h6" stroke="#66686d" /></svg></Thumb>
          <Down c="#555" />
        </Scrollbar>
      </Viewport>

      <StatusBar>
        Done
        <Cells><span /><span /><span /><span /><span /><span /></Cells>
        <Tool $w={206}><Globe />Internet | Protected Mode: On</Tool>
        <Tool $w={35} aria-label="Protection"><Shield /><Push /><Down c="#333" /><Push /></Tool>
        <Tool $w={63}><Zoom />100%<Push /><Down c="#333" /><Push /></Tool>
      </StatusBar>

      <Taskbar>
        <StartCell aria-label="Start"><Start /></StartCell>
        <TaskButton $on aria-label="Internet Explorer"><IE s={24} /></TaskButton>
        <TaskButton aria-label="Explorer"><Explorer /></TaskButton>
        <Tray>
          <TrayIcons>
            <Up c="#fff" w={5} />
            <Plug />
            <Signal />
            <Speaker />
          </TrayIcons>
          <Clock>6:53 PM<br />4/5/2011</Clock>
          <ShowDesktop aria-label="Show desktop" />
        </Tray>
      </Taskbar>
    </Window>
  );
}
